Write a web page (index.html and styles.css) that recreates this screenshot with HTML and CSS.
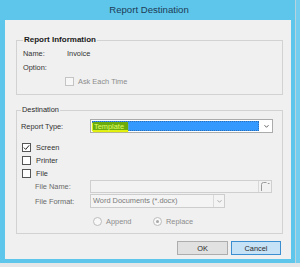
FILE: index.html
```html
<!DOCTYPE html>
<html>
<head>
<meta charset="utf-8">
<link rel="stylesheet" href="styles.css">
</head>
<body>
<div class="desk">
  <div class="window">
    <div class="titlebar">Report Destination</div>
    <div class="client">
      <fieldset class="group info">
        <legend class="legend bold">Report Information</legend>
        <div class="row"><span class="lbl name-lbl">Name:</span><span>Invoice</span></div>
        <div class="row"><span class="lbl">Option:</span></div>
        <div class="row ask"><span class="cb cb-disabled"></span><span class="dim">Ask Each Time</span></div>
      </fieldset>
      <fieldset class="group dest">
        <legend class="legend">Destination</legend>
        <div class="row type-row">
          <span class="lbl type-lbl">Report Type:</span>
          <div class="combo">
            <div class="combo-sel"><span class="hl">Template</span></div>
            <div class="combo-btn">
              <svg width="7" height="5" viewBox="0 0 7 5"><path d="M1.5 1.2 L3.5 3.3 L5.5 1.2" fill="none" stroke="#555" stroke-width="0.9"/></svg>
            </div>
          </div>
        </div>
        <div class="checks">
          <div class="crow"><span class="cb cb-on"><svg width="7" height="7" viewBox="0 0 7 7"><path d="M0.9 3.6 L2.7 5.4 L6.2 1.3" fill="none" stroke="#222" stroke-width="1"/></svg></span><span>Screen</span></div>
          <div class="crow"><span class="cb"></span><span>Printer</span></div>
          <div class="crow file-row"><span class="cb"></span><span>File</span></div>
        </div>
        <div class="row fn-row">
          <span class="lbl sub-lbl dimlbl">File Name:</span>
          <div class="textbox">
            <div class="tb-fill"></div>
            <div class="browse">
              <svg width="12" height="12" viewBox="0 0 12 12"><path d="M2.5 11 V4.5 Q2.5 2.5 4.5 2.5 H7.5" fill="none" stroke="#9a9a9a" stroke-width="1"/><path d="M8.8 3.5 H10.5" fill="none" stroke="#9a9a9a" stroke-width="1"/></svg>
            </div>
          </div>
        </div>
        <div class="row ff-row">
          <span class="lbl sub-lbl dimlbl">File Format:</span>
          <div class="dcombo">
            <div class="dcombo-txt">Word Documents (*.docx)</div>
            <div class="dcombo-btn">
              <svg width="7" height="5" viewBox="0 0 7 5"><path d="M1.5 1.2 L3.5 3.3 L5.5 1.2" fill="none" stroke="#a8a8a8" stroke-width="0.9"/></svg>
            </div>
          </div>
        </div>
        <div class="row radios">
          <div class="radio-item append"><span class="radio"></span><span class="dim">Append</span></div>
          <div class="radio-item"><span class="radio radio-on"></span><span class="dim">Replace</span></div>
        </div>
      </fieldset>
      <div class="buttons">
        <button class="btn">OK</button>
        <button class="btn btn-default">Cancel</button>
      </div>
    </div>
  </div>
  <div class="edge"></div>
</div>
</body>
</html>
```

FILE: styles.css
```css
* { box-sizing: border-box; }
html, body { margin: 0; padding: 0; }
body {
  width: 300px;
  height: 267px;
  background: #e4e6e8;
  font-family: "Liberation Sans", Arial, sans-serif;
  font-size: 7.4px;
  color: #333;
  overflow: hidden;
}
.desk {
  display: flex;
  height: 263px;
}
.window {
  width: 295px;
  height: 263px;
  background: #5ec6ea;
  display: flex;
  flex-direction: column;
  padding: 0 4px 4px 5px;
}
.edge {
  flex: 1;
  background: #72cdee;
  border-left: 1px solid #b9d3de;
}
.titlebar {
  height: 20px;
  line-height: 20px;
  text-align: center;
  font-size: 9.6px;
  color: #1d3b57;
  padding-left: 2px;
}
.client {
  height: 239px;
  background: #f0f0f0;
  padding: 14px 8px 0 11px;
  display: flex;
  flex-direction: column;
}
.group {
  margin: 0;
  border: 1px solid #d2d2d2;
  padding: 0 6px 6px 6px;
  min-width: 0;
}
.legend {
  margin-left: 0;
  padding: 0 1px;
  line-height: 12px;
  height: 12px;
  color: #2a2a2a;
}
.bold { font-weight: bold; font-size: 8px; color: #1a1a1a; }
.row {
  display: flex;
  align-items: center;
  height: 14px;
}
.lbl { display: inline-block; }
.name-lbl { width: 44px; }
.ask { padding-left: 42px; }
.cb {
  width: 9px;
  height: 9px;
  border: 1px solid #555;
  background: #fff;
  margin-right: 4px;
  display: inline-flex;
  align-items: center;
  justify-content: center;
  flex: none;
}
.cb-disabled { border-color: #c4c4c4; background: #f7f7f7; }
.dim { color: #8c8c8c; }
.dimlbl { color: #6a6a6a; }
.dest {
  margin-top: 9px;
  padding: 3px 8px 5px 4px;
}
.type-row { height: 14px; }
.type-lbl { width: 69px; }
.combo {
  width: 183px;
  height: 14px;
  border: 1px solid #ababab;
  background: #fff;
  display: flex;
  padding: 1px;
}
.combo-sel {
  width: 167px;
  background: #3399ff;
  border: 1px dotted #2a6fb8;
  display: flex;
  align-items: center;
}
.hl {
  background: #6aab0e;
  color: #e2ff6a;
  height: 100%;
  line-height: 9px;
  padding: 0 1px;
  width: 35px;
  box-shadow: -1px 1px 1px #dcef1a, 0 2px 1px #e6f000;
}
.combo-btn {
  flex: 1;
  display: flex;
  align-items: center;
  justify-content: center;
  padding-left: 2px;
}
.checks {
  margin-top: 8px;
  padding-left: 1px;
}
.crow {
  display: flex;
  align-items: center;
  height: 13px;
}
.crow .cb { margin-right: 5px; }
.file-row { height: 12px; }
.fn-row { height: 14px; }
.sub-lbl { width: 55px; margin-left: 14px; }
.textbox {
  width: 182px;
  height: 13px;
  border: 1px solid #cfcfcf;
  background: #f2f2f2;
  display: flex;
}
.tb-fill { flex: 1; }
.browse {
  width: 13px;
  border-left: 1px solid #d8d8d8;
  display: flex;
  align-items: center;
  justify-content: center;
}
.ff-row { margin-top: 1px; }
.dcombo {
  width: 135px;
  height: 14px;
  border: 1px solid #cdcdcd;
  background: #f4f4f4;
  display: flex;
}
.dcombo-txt {
  flex: 1;
  color: #7a7a7a;
  line-height: 12px;
  padding-left: 2px;
}
.dcombo-btn {
  width: 11px;
  border-left: 1px solid #dadada;
  display: flex;
  align-items: center;
  justify-content: center;
}
.radios {
  margin-top: 6px;
  padding-left: 72px;
}
.radio-item {
  display: flex;
  align-items: center;
}
.append { width: 60px; }
.radio {
  width: 9px;
  height: 9px;
  border-radius: 50%;
  border: 1px solid #bdbdbd;
  background: #f8f8f8;
  margin-right: 4px;
  display: inline-flex;
  align-items: center;
  justify-content: center;
}
.radio-on::after {
  content: "";
  width: 3px;
  height: 3px;
  border-radius: 50%;
  background: #a8a8a8;
}
.buttons {
  display: flex;
  justify-content: flex-end;
  gap: 3px;
  margin-top: 7px;
  padding-right: 2px;
}
.btn {
  width: 51px;
  height: 14px;
  border: 1px solid #adadad;
  background: #e1e1e1;
  font-family: "Liberation Sans", Arial, sans-serif;
  font-size: 7.4px;
  color: #2a2a2a;
  padding: 0;
  margin: 0;
}
.btn-default {
  width: 50px;
  background: #c5e2f7;
  border-color: #3b8fd0;
}
```
